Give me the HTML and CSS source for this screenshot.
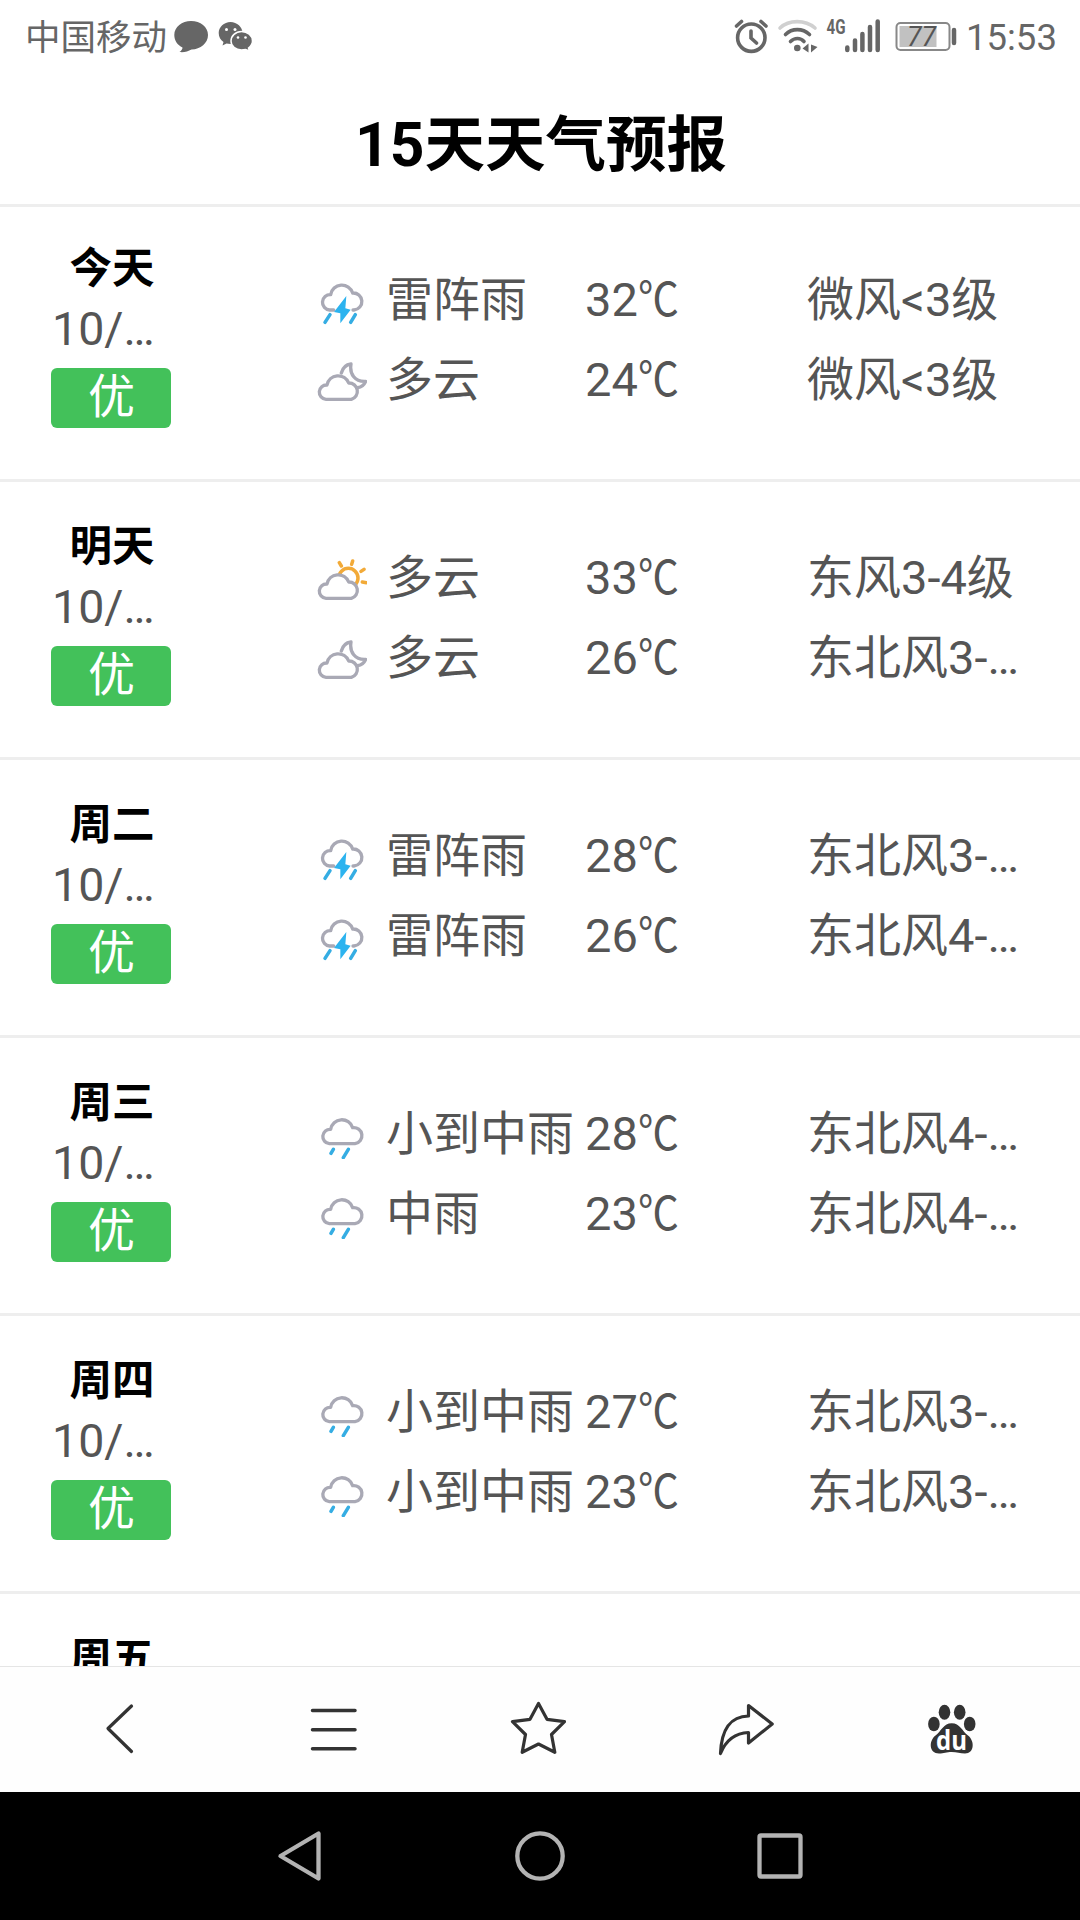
FILE: index.html
```
<!DOCTYPE html>
<html lang="zh-CN">
<head>
  <meta charset="UTF-8" />
  <meta name="viewport" content="width=device-width, initial-scale=1.0"/>
  <title>15天天气预报</title>
  <link rel="stylesheet" href="styles.css">
</head>
<body>

<!-- Weather icons -->
<svg class="sprite" width="0" height="0">
  <symbol id="thunder" viewBox="0 0 150 150">
    <path class="cloud" d="M50 105H38A23 23 0 0 1 41 59A34 34 0 0 1 107 54A25.500 25.500 0 0 1 111 105H108"/>
    <path class="bolt" d="M88 63L51 111L70 115V145L101 104L85 100Z"/>
    <path class="drop" d="M39 119L24 142M115 119L101 142"/>
  </symbol>
  <symbol id="rain" viewBox="0 0 150 150">
    <path class="cloud" d="M37 104A21.500 21.500 0 0 1 41 61A34 34 0 0 1 107 56A24 24 0 0 1 114 104Z"/>
    <path class="drop" d="M49 121L42 133M94 121L79 146"/>
  </symbol>
  <symbol id="moon" viewBox="0 0 150 150">
    <path class="cloud" d="M73 54C77 38 88 29 102 27C97 58 114 81 146 79C142 89 134 96 122 98"/>
    <path class="cloud cloud-fill" d="M27 133A21.500 21.500 0 0 1 30 90A34 34 0 0 1 95 84A25 25 0 0 1 103 133Z"/>
  </symbol>
  <symbol id="sun" viewBox="0 0 150 150">
    <circle class="sun" cx="94" cy="75" r="29"/>
    <path class="sun" d="M67 29L73 39M107 24L104 34M141 49L132 55M148 89L136 87"/>
    <path class="cloud cloud-fill" d="M27 136A21.500 21.500 0 0 1 30 93A34 34 0 0 1 95 87A25 25 0 0 1 103 136Z"/>
  </symbol>
</svg>

<div class="status-bar">
  <span class="carrier">中国移动</span>
  <svg class="notice-icons" width="80" height="40" viewBox="174 16 80 40">
    <path d="M191 21C200.500 21 208 27 208 35S200.500 49.500 191.500 49.500C188 51.500 184 52.500 179.500 52C181.500 50.500 182.500 49 182.500 47.500C177.500 45 174.300 40.500 174.300 35C174.300 27 182 21 191 21Z"/>
    <path d="M230.500 22C237 22 242.500 27 242.500 33S237 44 230.500 44L226.500 43.500L222.500 45.500L223.500 42C220.500 40 218.700 37 218.700 33C218.700 27 224 22 230.500 22Z"/>
    <path class="bubble-front" d="M241.500 31.500C247.500 31.500 252.500 35.500 252.500 41C252.500 44 251 46 248.500 48L249.500 51L245.500 49.500L241.500 50C235.500 50 231 46 231 41S235.500 31.500 241.500 31.500Z"/>
    <g fill="#fff"><circle cx="226.500" cy="29.500" r="1.500"/><circle cx="235" cy="29.500" r="1.500"/><circle cx="238" cy="37.500" r="1.300"/><circle cx="245.500" cy="37.500" r="1.300"/></g>
  </svg>
  <svg class="system-icons" width="224" height="40" viewBox="734 16 224 40">
    <!-- alarm -->
    <g class="line">
      <circle cx="751.300" cy="37.700" r="13.700"/>
      <path d="M751 31V38L756.500 43M736.500 26L741.500 21.500M766 26L761 21.500"/>
    </g>
    <!-- wifi -->
    <path class="line weak" d="M780 28C789 19.500 805 19.500 815 28"/>
    <path class="line" d="M785.500 34.500C792 28 802.500 28 809.500 34.500M790.500 41.500C794.500 37.500 800.500 37.500 804 41.500"/>
    <circle cx="797.300" cy="48" r="3.300"/>
    <path d="M802.500 48.500L808.500 43.500V52.500ZM811 44.500L817.500 47L811 52.500Z"/>
    <!-- signal -->
    <text class="net" x="826.500" y="34" textLength="19" lengthAdjust="spacingAndGlyphs">4G</text>
    <path class="bars" d="M847.300 47.500V50M855 40.500V50M862.400 34V50M870 27V50M877.700 21.500V50"/>
    <!-- battery -->
    <rect class="battery" x="896.500" y="23" width="53" height="27" rx="4"/>
    <rect x="899.500" y="26" width="37" height="21" fill="#c1c1c1"/>
    <text class="level" x="907" y="46" textLength="29" lengthAdjust="spacingAndGlyphs">77</text>
    <path class="bars" d="M954 30V43"/>
  </svg>
  <span class="clock">15:53</span>
</div>

<header>
  <h1>15天天气预报</h1>
</header>

<main>
  <section class="day">
    <div class="date">
      <h2>今天</h2>
      <p>10/…</p>
      <span class="air">优</span>
    </div>
    <div class="forecast">
      <svg><use href="#thunder"/></svg><span>雷阵雨</span><span>32<i>℃</i></span><span>微风&lt;3级</span>
      <svg><use href="#moon"/></svg><span>多云</span><span>24<i>℃</i></span><span>微风&lt;3级</span>
    </div>
  </section>

  <section class="day">
    <div class="date">
      <h2>明天</h2>
      <p>10/…</p>
      <span class="air">优</span>
    </div>
    <div class="forecast">
      <svg><use href="#sun"/></svg><span>多云</span><span>33<i>℃</i></span><span>东风3-4级</span>
      <svg><use href="#moon"/></svg><span>多云</span><span>26<i>℃</i></span><span>东北风3-…</span>
    </div>
  </section>

  <section class="day">
    <div class="date">
      <h2>周二</h2>
      <p>10/…</p>
      <span class="air">优</span>
    </div>
    <div class="forecast">
      <svg><use href="#thunder"/></svg><span>雷阵雨</span><span>28<i>℃</i></span><span>东北风3-…</span>
      <svg><use href="#thunder"/></svg><span>雷阵雨</span><span>26<i>℃</i></span><span>东北风4-…</span>
    </div>
  </section>

  <section class="day">
    <div class="date">
      <h2>周三</h2>
      <p>10/…</p>
      <span class="air">优</span>
    </div>
    <div class="forecast">
      <svg><use href="#rain"/></svg><span>小到中雨</span><span>28<i>℃</i></span><span>东北风4-…</span>
      <svg><use href="#rain"/></svg><span>中雨</span><span>23<i>℃</i></span><span>东北风4-…</span>
    </div>
  </section>

  <section class="day">
    <div class="date">
      <h2>周四</h2>
      <p>10/…</p>
      <span class="air">优</span>
    </div>
    <div class="forecast">
      <svg><use href="#rain"/></svg><span>小到中雨</span><span>27<i>℃</i></span><span>东北风3-…</span>
      <svg><use href="#rain"/></svg><span>小到中雨</span><span>23<i>℃</i></span><span>东北风3-…</span>
    </div>
  </section>

  <section class="day">
    <div class="date">
      <h2>周五</h2>
    </div>
  </section>
</main>

<!-- Browser toolbar -->
<nav class="toolbar">
  <svg viewBox="91 1698 60 60"><path d="M132.500 1706L109 1728.500L132.500 1751.500"/></svg>
  <svg viewBox="298 1698 60 60"><path class="thick" d="M312.500 1710.500H355M312.500 1729.700H355M312.500 1748.800H355"/></svg>
  <svg viewBox="506 1698 60 60"><path d="M538.500 1703.500L547 1719.300L564.500 1721.700L551.500 1734.500L554.800 1752.300L538.500 1744L522.200 1752.300L525.500 1734.500L512.500 1721.700L530 1719.300Z"/></svg>
  <svg viewBox="714 1698 60 60"><path d="M748.500 1705.500L772.200 1724L748.500 1743V1732.500C735 1733 726 1740 720.500 1753.500C721.500 1729 730 1716.500 748.500 1716Z"/></svg>
  <svg class="paw" viewBox="922 1698 60 60">
    <ellipse cx="944.500" cy="1712.300" rx="5.800" ry="7.500"/>
    <ellipse cx="959.700" cy="1712.300" rx="5.800" ry="7.500"/>
    <ellipse cx="933.900" cy="1724" rx="5.800" ry="7.300"/>
    <ellipse cx="969.700" cy="1724" rx="5.800" ry="7.300"/>
    <path d="M951.700 1723.300C960 1723.300 962 1731 968 1735.500C975 1741 974.500 1753.500 965 1753.500C960 1753.500 957 1752 951.700 1752S944 1753.500 939 1753.500C929 1753.500 928.500 1741 935.500 1735.500C941.500 1731 943.500 1723.300 951.700 1723.300Z"/>
    <text x="936" y="1749.500" textLength="31" lengthAdjust="spacingAndGlyphs">du</text>
  </svg>
</nav>

<!-- System navigation -->
<footer>
  <svg viewBox="270 1826 60 60"><path d="M318.500 1833.500V1878.500L280.500 1856Z"/></svg>
  <svg viewBox="510 1826 60 60"><circle cx="540" cy="1856" r="22.700"/></svg>
  <svg viewBox="750 1826 60 60"><rect x="759.500" y="1835.500" width="41" height="41" rx="1.500"/></svg>
</footer>

</body>
</html>
```
FILE: styles.css
```
* {
  box-sizing: border-box;
}

body {
  margin: 0;
  height: 1920px;
  display: flex;
  flex-direction: column;
  overflow: hidden;
  background: #fff;
  color: #555;
  font-family: Roboto, "Noto Sans CJK SC", sans-serif;
}

h1, h2, p {
  margin: 0;
}

.sprite {
  position: absolute;
}

/* Status bar */
.status-bar {
  display: flex;
  align-items: center;
  height: 72px;
  padding: 0 24px 0 25px;
  color: #666;
  fill: #666;
}

.carrier {
  width: 149px;
  padding-top: 4px;
  font-size: 35.5px;
  line-height: 72px;
}

.system-icons {
  margin-left: auto;
}

.clock {
  width: 90px;
  margin-left: 8px;
  padding-top: 4px;
  font-size: 36.5px;
  line-height: 72px;
  white-space: nowrap;
}

.bubble-front {
  stroke: #fff;
  stroke-width: 1.5;
}

.line {
  fill: none;
  stroke: #666;
  stroke-width: 3.6;
  stroke-linecap: round;
}

.weak {
  stroke: #d0d0d0;
}

.bars {
  stroke: #666;
  stroke-width: 4.5;
  stroke-linecap: round;
}

.battery {
  fill: none;
  stroke: #888;
  stroke-width: 2;
}

.net {
  font-size: 20px;
  font-weight: 700;
}

.level {
  font-size: 27px;
  font-style: italic;
  fill: #555;
}

/* Title */
header {
  height: 135px;
  border-bottom: 3px solid #eee;
  text-align: center;
}

h1 {
  padding-left: 2px;
  font-size: 60.5px;
  font-weight: 700;
  line-height: 147px;
  height: 132px;
  color: #000;
}

/* Day list */
main {
  flex: 1;
  min-height: 0;
  overflow: hidden;
}

.day {
  display: flex;
  height: 278px;
  padding-left: 51px;
  border-bottom: 3px solid #eee;
}

.day:first-child {
  height: 275px;
}

.day:first-child .date {
  padding-top: 30px;
}

.day:first-child .forecast {
  padding-top: 53px;
}

.date {
  width: 120px;
  margin-right: 146px;
  padding-top: 33px;
}

.date h2 {
  padding-left: 2px;
  font-size: 42.5px;
  font-weight: 700;
  line-height: 63px;
  text-align: center;
  color: #000;
}

.date p {
  padding-left: 1px;
  font-size: 46.500px;
  line-height: 58px;
}

.air {
  display: block;
  height: 60px;
  margin-top: 10px;
  padding-left: 1px;
  border-radius: 6px;
  background: #43c15a;
  color: #fff;
  font-size: 47px;
  line-height: 57px;
  text-align: center;
}

.forecast {
  display: grid;
  grid-template-columns: 69px 199px 222px auto;
  grid-auto-rows: 80px;
  align-content: start;
  align-items: center;
  padding-top: 56px;
  font-size: 47px;
  line-height: 80px;
  white-space: nowrap;
}

/* narrow degree sign */
.forecast i {
  display: inline-block;
  font-style: normal;
  transform: scaleX(0.87);
  transform-origin: left;
}

.forecast svg {
  width: 50px;
  height: 50px;
}

.cloud {
  fill: none;
  stroke: #a9a9b5;
  stroke-width: 10;
  stroke-linecap: round;
  stroke-linejoin: round;
}

.cloud-fill {
  fill: #fff;
}

.bolt {
  fill: #2cb3ef;
}

.drop {
  fill: none;
  stroke: #35ade3;
  stroke-width: 10.5;
  stroke-linecap: round;
}

.sun {
  fill: none;
  stroke: #f2aa38;
  stroke-width: 10.5;
  stroke-linecap: round;
}

/* Bottom bars */
.toolbar {
  display: flex;
  justify-content: space-between;
  height: 126px;
  padding: 31px 98px 0 90px;
  border-top: 1px solid #e5e5e5;
  background: #fefefe;
}

.toolbar svg {
  width: 60px;
  height: 60px;
  fill: none;
  stroke: #333;
  stroke-width: 3.2;
  stroke-linecap: round;
  stroke-linejoin: round;
}

.toolbar .thick {
  stroke-width: 3.5;
}

.toolbar .paw {
  fill: #333;
  stroke: none;
}

.paw text {
  font-size: 26px;
  font-weight: 700;
  font-family: "Open Sans", sans-serif;
  fill: #fff;
}

footer {
  display: flex;
  justify-content: center;
  gap: 180px;
  height: 128px;
  padding-top: 34px;
  background: #000;
}

footer svg {
  width: 60px;
  height: 60px;
  fill: none;
  stroke: #b3b3b3;
  stroke-width: 4.3;
  stroke-linejoin: round;
}
```
